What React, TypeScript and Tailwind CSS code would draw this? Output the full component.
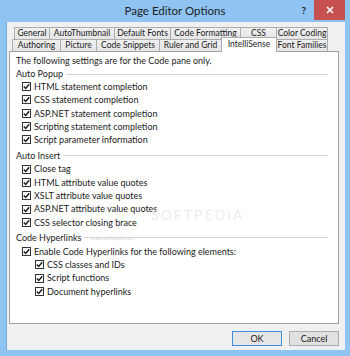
import React from "react";

const row1 = [
  { label: "General", w: "w-[36px]" },
  { label: "AutoThumbnail", w: "w-[66px]" },
  { label: "Default Fonts", w: "w-[57px]" },
  { label: "Code Formatting", w: "w-[71px]" },
  { label: "CSS", w: "w-[37px]" },
  { label: "Color Coding", w: "w-[52px]" },
];

const row2 = [
  { label: "Authoring", w: "w-[49px]" },
  { label: "Picture", w: "w-[37px]" },
  { label: "Code Snippets", w: "w-[64px]" },
  { label: "Ruler and Grid", w: "w-[63px]" },
  { label: "IntelliSense", w: "w-[56px]", active: true },
  { label: "Font Families", w: "w-[52px]" },
];

function Tab({ label, w, active }: { label: string; w: string; active?: boolean }) {
  if (active) {
    return (
      <div
        className={`${w} relative z-10 -mt-[2px] -mb-[1px] h-[15px] whitespace-nowrap border border-b-0 border-[#acacac] bg-white text-center text-[8.5px] leading-[13px]`}
      >
        {label}
      </div>
    );
  }
  return (
    <div
      className={`${w} h-[12px] -ml-px first:ml-0 overflow-hidden whitespace-nowrap border border-b-0 border-[#acacac] bg-gradient-to-b from-[#f0f0f0] to-[#e5e5e5] text-center text-[8.5px] leading-[11px]`}
    >
      {label}
    </div>
  );
}

function Box({ checked = true }: { checked?: boolean }) {
  return (
    <span className="flex h-[9px] w-[9px] shrink-0 items-center justify-center border border-[#333333] bg-white">
      {checked && (
        <svg width="7" height="7" viewBox="0 0 7 7">
          <path d="M0.8 3.6 L2.7 5.5 L6.2 1.2" fill="none" stroke="#1a1a1a" strokeWidth="1.4" />
        </svg>
      )}
    </span>
  );
}

function Check({ label, nested }: { label: string; nested?: boolean }) {
  return (
    <div className={`flex h-[13.3px] items-center gap-[3px] ${nested ? "pl-[19px]" : "pl-[6px]"}`}>
      <Box />
      <span>{label}</span>
    </div>
  );
}

function Group({ label, className = "" }: { label: string; className?: string }) {
  return (
    <div className={`flex h-[14px] items-center ${className}`}>
      <span>{label}</span>
      <span className="ml-[3px] mr-[4px] flex-1 border-t border-[#d5d5d5]" />
    </div>
  );
}

export default function App() {
  return (
    <div className="flex h-[356px] w-[350px] flex-col bg-[#8ec3f2] font-['Lato','Noto_Sans',sans-serif] text-[9px] text-[#1a1a1a]">
      {/* title bar */}
      <div className="grid h-[22px] shrink-0 grid-cols-[1fr_auto_1fr]">
        <div />
        <div className="pt-[2px] text-[11.5px] leading-[18px] text-[#1e1e1e]">Page Editor Options</div>
        <div className="flex justify-end pr-[5px]">
          <span className="mr-[8px] mt-[3px] text-[10px] font-bold leading-[14px] text-[#222]">?</span>
          <div className="flex h-[20px] w-[31px] items-center justify-center bg-[#c75050]">
            <svg width="8" height="8" viewBox="0 0 8 8">
              <path d="M1 1 L7 7 M7 1 L1 7" stroke="white" strokeWidth="1.6" />
            </svg>
          </div>
        </div>
      </div>

      {/* client area */}
      <div className="relative mb-[6px] ml-[6px] mr-[5px] flex flex-1 flex-col border-l border-[#76a8d8] bg-[#f0f0f0] pt-[5px]">
        <div className="flex pl-[7px]">
          {row1.map((t) => (
            <Tab key={t.label} label={t.label} w={t.w} />
          ))}
        </div>
        <div className="flex pl-[5px]">
          {row2.map((t, i) => (
            <div key={t.label} className={`flex items-end ${i === 0 ? "" : "-ml-px"}`}>
              <Tab label={t.label} w={t.w} active={t.active} />
            </div>
          ))}
        </div>

        <div className="ml-[2px] mr-[6px] h-[273px] border border-[#a0a0a0] bg-white px-[6px] pt-[2px]">
          <div className="flex h-[13px] items-center">The following settings are for the Code pane only.</div>
          <Group label="Auto Popup" className="-mb-[1px]" />
          <Check label="HTML statement completion" />
          <Check label="CSS statement completion" />
          <Check label="ASP.NET statement completion" />
          <Check label="Scripting statement completion" />
          <Check label="Script parameter information" />
          <Group label="Auto Insert" className="mt-[2px]" />
          <Check label="Close tag" />
          <Check label="HTML attribute value quotes" />
          <Check label="XSLT attribute value quotes" />
          <Check label="ASP.NET attribute value quotes" />
          <Check label="CSS selector closing brace" />
          <Group label="Code Hyperlinks" className="mt-[2px]" />
          <Check label="Enable Code Hyperlinks for the following elements:" />
          <Check label="CSS classes and IDs" nested />
          <Check label="Script functions" nested />
          <Check label="Document hyperlinks" nested />
        </div>

        <div className="pointer-events-none absolute left-[144px] top-[182px] text-[14px] tracking-[2px] text-[#ededed]">SOFTPEDIA</div>
        <div className="pointer-events-none absolute left-[84px] top-[213px] text-[5px] text-[#d6d6d6]">www.softpedia.com</div>

        <div className="flex justify-end gap-[7px] pr-[6px] pt-[7px]">
          <button className="h-[15px] w-[50px] border border-[#3c8fe0] bg-[#e5e5e5] text-[9px] leading-[13px]">OK</button>
          <button className="h-[15px] w-[50px] border border-[#adadad] bg-[#e1e1e1] text-[9px] leading-[13px]">Cancel</button>
        </div>
      </div>
    </div>
  );
}
